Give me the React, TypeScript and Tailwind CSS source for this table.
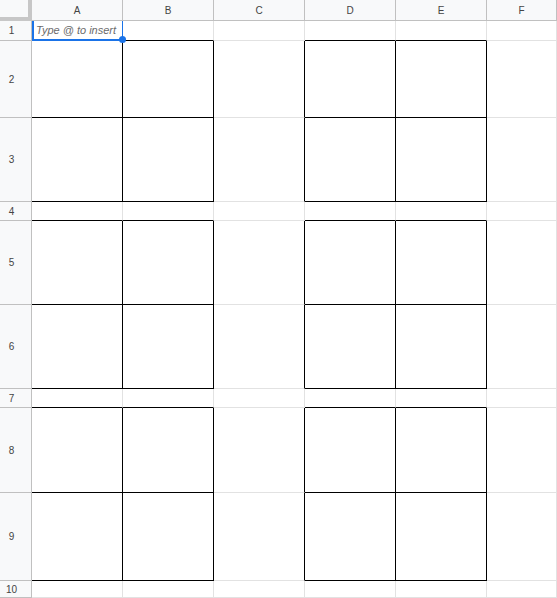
import clsx from "clsx";

const COLS = ["A", "B", "C", "D", "E", "F"];
const ROWS = [1, 2, 3, 4, 5, 6, 7, 8, 9, 10];

// rows that hold the boxed blocks, and the thin rows above them
const BOX_ROWS = [2, 3, 5, 6, 8, 9];
const ABOVE_ROWS = [1, 4, 7];
// column indexes (0 = row header) covered by the boxes
const BOX_COLS = [1, 2, 4, 5];

function Cell({ row, col }: { row: number; col: number }) {
  const inBox = BOX_ROWS.includes(row);
  const rightBlack = inBox && (BOX_COLS.includes(col) || col === 3);
  const bottomBlack =
    (inBox || ABOVE_ROWS.includes(row)) && BOX_COLS.includes(col);

  return (
    <div
      className={clsx(
        "relative border-r border-b bg-white",
        rightBlack ? "border-r-black" : "border-r-[#e2e2e2]",
        bottomBlack ? "border-b-black" : "border-b-[#e2e2e2]"
      )}
    >
      {row === 1 && col === 1 && (
        <>
          <div className="absolute left-0 top-0 h-[20px] w-[91px] border-b-2 border-l-2 border-r border-[#1a73e8]" />
          <span className="absolute left-[4px] top-[2px] whitespace-nowrap text-[11px] leading-[14px] italic text-[#6b6b6b]">
            Type @ to insert
          </span>
          <div className="absolute left-[87px] top-[15px] z-10 h-[7px] w-[7px] rounded-full bg-[#1a73e8]" />
        </>
      )}
    </div>
  );
}

export default function App() {
  return (
    <div
      className="grid h-screen w-full overflow-hidden bg-white grid-cols-[32px_91px_91px_91px_91px_91px_1fr] grid-rows-[21px_20px_77px_84px_19px_84px_84px_19px_85px_88px_1fr]"
      style={{ fontFamily: '"Liberation Sans", Arial, sans-serif' }}
    >
      <div className="border-r-[4px] border-b-[4px] border-[#c7c7c7] bg-[#f8f9fa]" />
      {COLS.map((c) => (
        <div
          key={c}
          className="flex items-center justify-center border-r border-b border-[#c0c0c0] bg-[#f8f9fa] text-[10px] text-[#444]"
        >
          {c}
        </div>
      ))}
      {ROWS.map((r) => (
        <div key={r} className="contents">
          <div className="flex items-center justify-center border-r border-b border-[#c0c0c0] bg-[#f8f9fa] pr-[8px] text-[10px] text-[#444]">
            {r}
          </div>
          {COLS.map((c, i) => (
            <Cell key={c} row={r} col={i + 1} />
          ))}
        </div>
      ))}
    </div>
  );
}
